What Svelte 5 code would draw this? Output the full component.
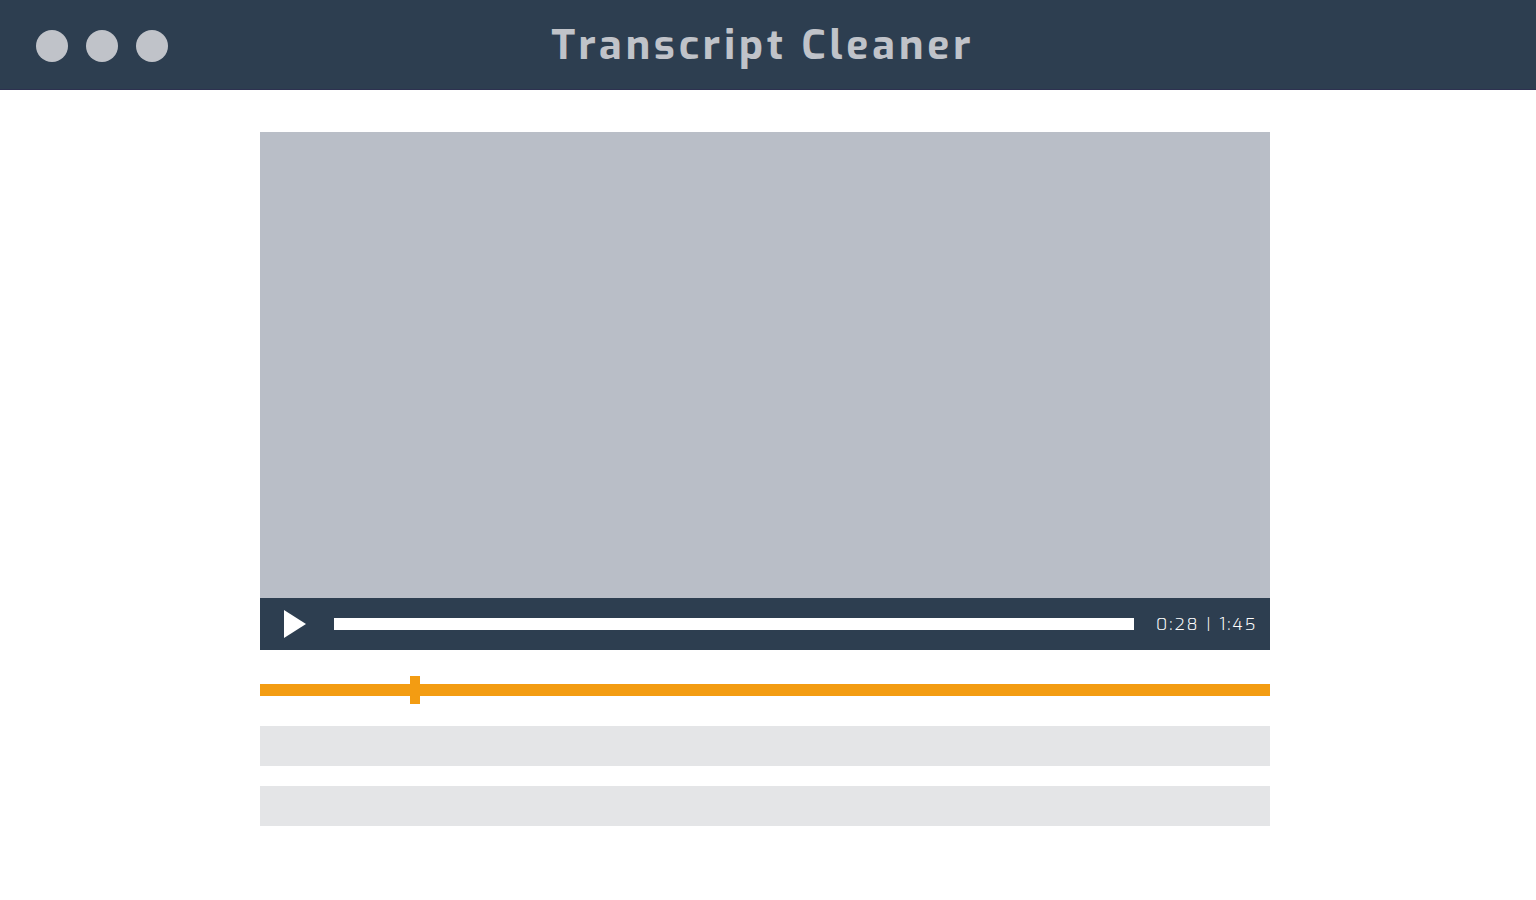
<script>
  let position = $state(28);
  let marker = $state(15);
  let lines = $state(['', '']);
  const duration = 105;

  const clock = (s) => `${Math.floor(s / 60)}:${String(s % 60).padStart(2, '0')}`;
</script>

<header>
  <div class="dots" aria-hidden="true">
    <span></span><span></span><span></span>
  </div>
  <h1>Transcript Cleaner</h1>
</header>

<main>
  <section class="player">
    <div class="screen"></div>
    <div class="controls">
      <button type="button" aria-label="Play">
        <svg viewBox="0 0 22 28" width="22" height="28" aria-hidden="true">
          <path d="M0 0L22 14L0 28Z" fill="#fff" />
        </svg>
      </button>
      <input class="seek" type="range" min="0" max={duration} bind:value={position} aria-label="Seek" />
      <span class="time">{clock(position)} | {clock(duration)}</span>
    </div>
  </section>

  <input class="marker" type="range" min="0" max="100" bind:value={marker} aria-label="Transcript position" />

  <div class="lines">
    {#each lines as _, i}
      <input type="text" bind:value={lines[i]} aria-label={`Transcript line ${i + 1}`} />
    {/each}
  </div>
</main>

<style>
  :global(body) {
    margin: 0;
    background: #fff;
    font-family: Exo, "Exo 2", Roboto, sans-serif;
  }

  header {
    box-sizing: border-box;
    display: grid;
    grid-template-columns: 1fr auto 1fr;
    align-items: center;
    min-height: 90px;
    padding: 2px 46px 0 36px;
    background: #2d3e50;
    border-bottom: 1px solid #2d3150;
  }

  .dots {
    display: flex;
    gap: 18px;
  }

  .dots span {
    width: 32px;
    height: 32px;
    border-radius: 50%;
    background: #c0c3c9;
  }

  h1 {
    margin: 0;
    padding-bottom: 2px;
    color: #c0c3c9;
    font-size: 41px;
    line-height: 48px;
    font-weight: 700;
    letter-spacing: 4px;
  }

  main {
    box-sizing: border-box;
    max-width: 1016px;
    margin: 0 auto;
    padding: 42px 6px 42px 0;
  }

  .screen {
    aspect-ratio: 1010 / 466;
    background: #b9bec7;
  }

  .controls {
    display: flex;
    align-items: center;
    height: 52px;
    padding: 0 14px 0 24px;
    background: #2d3e50;
  }

  button {
    display: flex;
    padding: 0;
    border: 0;
    background: none;
    cursor: pointer;
  }

  input {
    box-sizing: border-box;
    display: block;
    width: 100%;
    margin: 0;
    padding: 0;
    border: 0;
    border-radius: 0;
  }

  input[type="range"] {
    appearance: none;
    background: none;
    cursor: pointer;
  }

  .seek {
    flex: 1;
    min-width: 0;
    height: 12px;
    margin: 0 22px 0 28px;
  }

  .seek::-webkit-slider-runnable-track {
    height: 12px;
    background: #fff;
  }

  .seek::-webkit-slider-thumb {
    appearance: none;
    width: 12px;
    height: 12px;
    background: #fff;
  }

  .time {
    width: 100px;
    padding-top: 1px;
    color: #fff;
    font-size: 17px;
    line-height: 20px;
    font-weight: 300;
    letter-spacing: 2px;
    white-space: nowrap;
  }

  .marker {
    height: 28px;
    margin-top: 26px;
  }

  .marker::-webkit-slider-runnable-track {
    height: 12px;
    background: #f39c12;
  }

  .marker::-webkit-slider-thumb {
    appearance: none;
    width: 10px;
    height: 28px;
    margin-top: -8px;
    background: #f39c12;
  }

  .lines {
    display: grid;
    gap: 20px;
    margin-top: 22px;
  }

  .lines input {
    height: 40px;
    padding: 0 12px;
    background: #e4e5e7;
    color: #2d3e50;
    font: 16px Exo, Roboto, sans-serif;
  }
</style>
